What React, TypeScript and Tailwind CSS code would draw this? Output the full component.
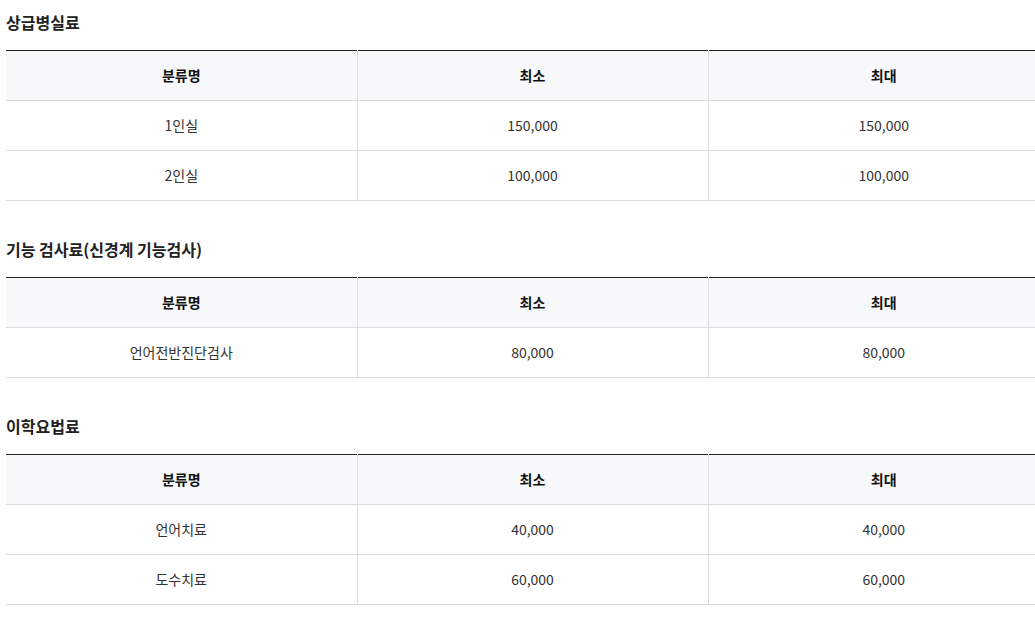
const sections = [
  {
    title: "상급병실료",
    rows: [
      ["1인실", "150,000", "150,000"],
      ["2인실", "100,000", "100,000"],
    ],
  },
  {
    title: "기능 검사료(신경계 기능검사)",
    rows: [["언어전반진단검사", "80,000", "80,000"]],
  },
  {
    title: "이학요법료",
    rows: [
      ["언어치료", "40,000", "40,000"],
      ["도수치료", "60,000", "60,000"],
    ],
  },
];

const FeeTable = ({ title, rows }: { title: string; rows: string[][] }) => {
  return (
    <section className="mt-[34px] first:mt-0">
      <h3 className="h-[28px] text-[16px] font-bold leading-[28px] text-[#222]">{title}</h3>
      <table className="mt-[14px] w-[1053px] table-fixed border-collapse border-t border-[#222]">
        <thead>
          <tr className="h-[50px] border-b border-[#dcdcdc] bg-[#f7f8fa]">
            <th className="border-r border-[#dcdcdc] text-[14px] font-bold text-[#111]">분류명</th>
            <th className="border-r border-[#dcdcdc] text-[14px] font-bold text-[#111]">최소</th>
            <th className="text-[14px] font-bold text-[#111]">최대</th>
          </tr>
        </thead>
        <tbody>
          {rows.map((row) => (
            <tr key={row[0]} className="h-[50px] border-b border-[#dcdcdc]">
              {row.map((cell, i) => (
                <td
                  key={i}
                  className={
                    i < 2
                      ? "border-r border-[#dcdcdc] text-center text-[14px] text-[#333]"
                      : "text-center text-[14px] text-[#333]"
                  }
                >
                  {cell}
                </td>
              ))}
            </tr>
          ))}
        </tbody>
      </table>
    </section>
  );
};

export default function App() {
  return (
    <div
      className="w-[1035px] overflow-hidden bg-white pl-[6px] pt-[8px]"
      style={{ fontFamily: '"Noto Sans CJK KR", "Noto Sans", sans-serif' }}
    >
      {sections.map((s) => (
        <FeeTable key={s.title} title={s.title} rows={s.rows} />
      ))}
    </div>
  );
}
